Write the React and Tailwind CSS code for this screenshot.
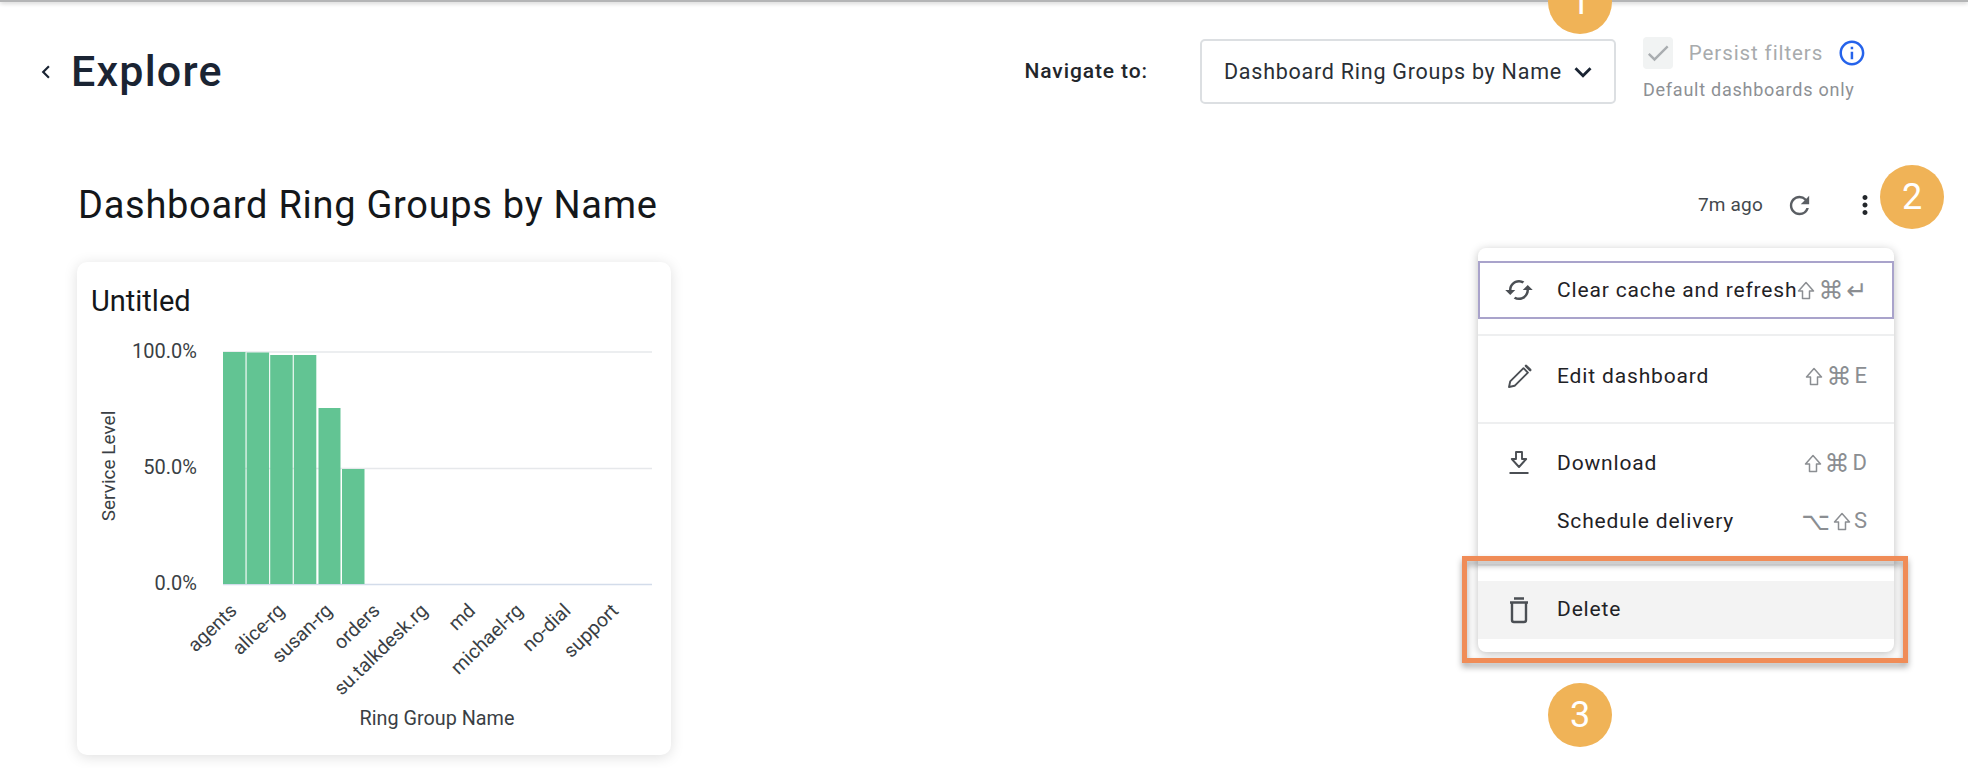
import React from "react";
import { MdCached, MdRefresh, MdInfoOutline, MdMoreVert, MdCheck, MdKeyboardArrowDown, MdChevronLeft } from "react-icons/md";

const bars = [
  [146, 22.5, 232],
  [169.6, 22.5, 231.5],
  [193.2, 22.5, 229],
  [216.8, 22.5, 229],
  [241.5, 22, 176],
  [265, 22.5, 115],
];
const labels = ["agents", "alice-rg", "susan-rg", "orders", "su.talkdesk.rg", "md", "michael-rg", "no-dial", "support"];

function Chart() {
  return (
    <svg className="block" width="594" height="434" viewBox="0 0 594 434">
      <line x1="146" x2="575" y1="31" y2="31" stroke="#e6e8eb" strokeWidth="1.5" />
      <line x1="146" x2="575" y1="147.5" y2="147.5" stroke="#e6e8eb" strokeWidth="1.5" />
      <line x1="146" x2="575" y1="263.5" y2="263.5" stroke="#d3dcea" strokeWidth="1.5" />
      {bars.map(([x, w, h], i) => (
        <rect key={i} x={x} y={263 - h} width={w} height={h} fill="#62c493" />
      ))}
      <g className="text-[20px]" fill="#3a3f45" textAnchor="end">
        <text x="120" y="37">100.0%</text>
        <text x="120" y="153">50.0%</text>
        <text x="120" y="269">0.0%</text>
      </g>
      <text className="text-[19px]" fill="#3a3f45" textAnchor="middle" transform="translate(38 145) rotate(-90)">Service Level</text>
      <g className="text-[19.5px]" fill="#3a3f45" textAnchor="end">
        {labels.map((l, i) => (
          <text key={l} transform={`translate(${161 + i * 47.7} 291) rotate(-44)`}>{l}</text>
        ))}
      </g>
      <text className="text-[19.8px]" fill="#3a3f45" textAnchor="middle" x="360" y="404">Ring Group Name</text>
    </svg>
  );
}

function PencilIcon() {
  return (
    <svg width="26" height="26" viewBox="0 0 26 26" fill="none" stroke="currentColor" strokeWidth="1.9" strokeLinejoin="round">
      <path d="M2 24l1.2-5.6L16.5 5.2l4.4 4.4L7.6 22.8z" />
      <path d="M19 2.8l4.2 4.2" strokeLinecap="round" strokeWidth="2.6" />
    </svg>
  );
}

function DownloadIcon() {
  return (
    <svg width="24" height="26" viewBox="0 0 24 26" fill="none" stroke="currentColor" strokeWidth="1.9" strokeLinejoin="round">
      <path d="M9 2h6v7h4.2L12 17 4.8 9H9z" />
      <path d="M2.5 23h19" strokeWidth="2" />
    </svg>
  );
}

function TrashIcon() {
  return (
    <svg width="24" height="28" viewBox="0 0 24 28" fill="none" stroke="currentColor" strokeWidth="2.4" strokeLinejoin="round">
      <path d="M7 2.5h10M3 6.5h18" />
      <path d="M5 7v17a2 2 0 0 0 2 2h10a2 2 0 0 0 2-2V7" />
    </svg>
  );
}

function ShiftIcon() {
  return (
    <svg width="18" height="19" viewBox="0 0 18 19" fill="none" stroke="currentColor" strokeWidth="1.5" strokeLinejoin="round">
      <path d="M9 1.5L1.5 10H5.5v7.5h7V10h4z" />
    </svg>
  );
}

function Keys({ keys }) {
  return (
    <span className="ml-auto flex items-center gap-[3px] whitespace-nowrap text-[#8b8e92]">
      {keys.map((k, i) =>
        k === "⇧" ? (
          <ShiftIcon key={i} />
        ) : /[A-Z]/.test(k) ? (
          <span key={i} className="text-[22px] leading-none">{k}</span>
        ) : (
          <span key={i} className="text-[25px] leading-none font-['DejaVu_Sans',sans-serif]">{k}</span>
        )
      )}
    </span>
  );
}

function Item({ icon, label, keys = [], cls = "", pad = "pl-[29px] pr-[27px]", lbl = "mt-[2px]" }) {
  return (
    <div className={`flex items-center h-[58px] ${pad} ${cls}`}>
      <span className="w-[50px] flex-none text-[#4b4f54] text-[30px] flex items-center">{icon}</span>
      <span className={`text-[21px] text-[#1f2226] tracking-[0.85px] whitespace-nowrap ${lbl}`}>{label}</span>
      <Keys keys={keys} />
    </div>
  );
}

function Badge({ n, cls }) {
  return (
    <div className={`absolute w-[64px] h-[64px] rounded-full bg-[#f0b357] text-white text-[36px] flex items-center justify-center ${cls}`}>{n}</div>
  );
}

export default function App() {
  return (
    <div className="relative w-[1968px] h-[768px] overflow-hidden bg-white font-[Roboto,sans-serif]">
      <div className="h-[2px] bg-[#b4b5b6] shadow-[0_1px_4px_rgba(0,0,0,0.3)]"></div>
      <header className="flex items-center h-[65px] mt-[37px] pl-[33px] pr-[101px]">
        <MdChevronLeft className="text-[26px] text-[#1a2433]" />
        <h1 className="ml-[12px] text-[43px] font-medium tracking-[1.2px] text-[#1a2433] leading-none">Explore</h1>
        <span className="ml-auto text-[21px] font-medium tracking-[0.9px] text-[#22262b]">Navigate to:</span>
        <div className="ml-[52px] w-[416px] h-[65px] rounded-[5px] border-2 border-[#dcdfe2] flex items-center pl-[22px] pr-[14px]">
          <span className="mt-[2px] text-[21.5px] tracking-[0.75px] text-[#2a2f35] whitespace-nowrap">Dashboard Ring Groups by Name</span>
          <MdKeyboardArrowDown className="ml-auto text-[34px] text-[#1a2433] flex-none" />
        </div>
        <div className="ml-[27px] w-[224px] h-[65px] flex flex-col">
          <div className="flex items-center h-[32px] -mt-[2px]">
            <span className="w-[32px] h-[32px] rounded-[4px] bg-[#f1f3f3] flex items-center justify-center">
              <MdCheck className="text-[28px] text-[#a9adb0]" />
            </span>
            <span className="ml-[16px] mt-[1px] text-[20.5px] text-[#a8abad] tracking-[0.9px] whitespace-nowrap">Persist filters</span>
            <MdInfoOutline className="ml-[14px] text-[32px] text-[#2563eb]" />
          </div>
          <span className="mt-[7px] text-[18px] tracking-[0.75px] text-[#8d9094] whitespace-nowrap">Default dashboards only</span>
        </div>
      </header>

      <section className="flex items-center h-[50px] mt-[76px] pl-[78px] pr-[88px]">
        <h2 className="text-[38px] font-normal tracking-[0.72px] text-[#14171a] leading-none whitespace-nowrap">Dashboard Ring Groups by Name</h2>
        <span className="ml-auto text-[19px] tracking-[0.2px] text-[#44484d]">7m ago</span>
        <MdRefresh className="ml-[22px] text-[29px] text-[#5a5e63]" />
        <MdMoreVert className="ml-[36px] text-[30px] text-[#23272b]" />
      </section>

      <div className="ml-[77px] mt-[32px] w-[594px] h-[493px] rounded-[10px] bg-white shadow-[0_2px_14px_rgba(0,0,0,0.13)]">
        <div className="pl-[14px] pt-[19px] h-[59px] text-[29px] leading-[40px] text-[#14171a]">Untitled</div>
        <Chart />
      </div>

      <div className="absolute left-[1478px] top-[248px] w-[416px] h-[404px] rounded-[8px] bg-white shadow-[0_2px_10px_rgba(0,0,0,0.25)] pt-[13px]">
        <Item pad="pl-[24px] pr-[25px]" cls="border-2 border-[#a9a3cb]" lbl="mt-[2px] ml-[3px]" icon={<MdCached />} label="Clear cache and refresh" keys={["⇧", "⌘", "↵"]} />
        <div className="mt-[15px] border-t-2 border-[#eeeff0] h-[88px]">
          <Item cls="h-[80px]" icon={<PencilIcon />} label="Edit dashboard" keys={["⇧", "⌘", "E"]} />
        </div>
        <div className="border-t-2 border-[#eeeff0] pt-[10px]">
          <Item icon={<DownloadIcon />} label="Download" keys={["⇧", "⌘", "D"]} />
          <Item icon={null} label="Schedule delivery" keys={["⌥", "⇧", "S"]} />
        </div>
        <div className="mt-[14px] border-t-2 border-[#eeeff0] pt-[15px]">
          <Item cls="h-[56px] bg-[#f3f3f3]" lbl="" icon={<TrashIcon />} label="Delete" />
        </div>
      </div>

      <div className="absolute left-[1462px] top-[556px] w-[446px] h-[107px] border-[5px] border-[#f08c57] drop-shadow-[0_4px_3px_rgba(0,0,0,0.35)]"></div>

      <Badge n="1" cls="left-[1548px] -top-[30px]" />
      <Badge n="2" cls="left-[1880px] top-[165px]" />
      <Badge n="3" cls="left-[1548px] top-[683px]" />
    </div>
  );
}
